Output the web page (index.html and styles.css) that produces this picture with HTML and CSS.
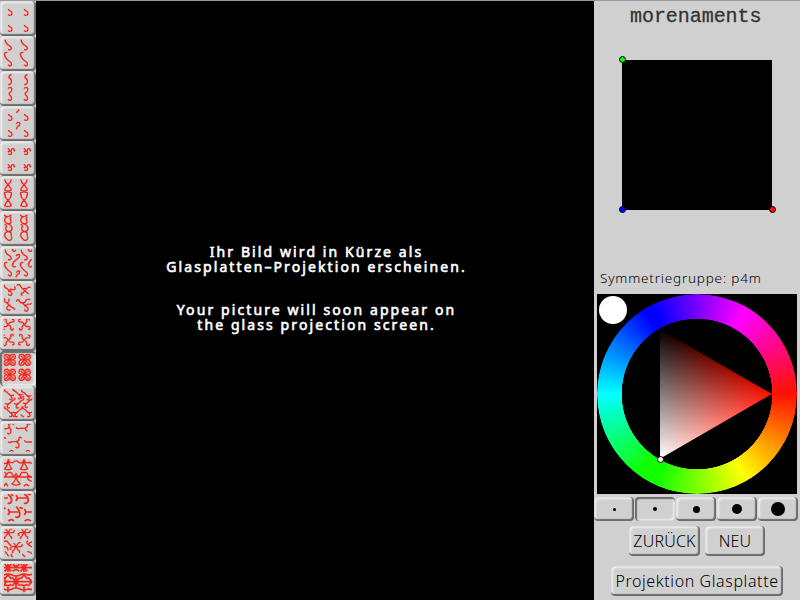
FILE: index.html
```html
<!DOCTYPE html>
<html lang="de">
<head>
<meta charset="utf-8">
<title>morenaments</title>
<link rel="stylesheet" href="styles.css">
</head>
<body>
<svg class="defs" width="0" height="0">
  <defs>
    <path id="hook" d="M-5 -9Q-4 -5 1 -3L5 0Q7 4 5 8Q0 12 -6 8"/>
    <path id="ess" d="M-10 -16Q-9 -8 -2 -1Q10 5 9 11Q5 17 -1 13"/>
    <path id="arm" d="M0 0Q4 -7 9 -7Q18 -5 17 -13Q14 -16 11 -14"/>
    <g id="pin"><use href="#arm"/><use href="#arm" transform="rotate(90)"/><use href="#arm" transform="rotate(180)"/><use href="#arm" transform="rotate(270)"/></g>
    <path id="glass" d="M-10 -16Q-8 -6 0 0Q7 7 10 16Q0 22 -10 16Q-7 7 0 0Q8 -6 10 -16"/>
    <path id="flower" d="M-12 -12L12 12M12 -12L-12 12M-17 -5Q-17 -17 -11 -16Q-3 -18 0 -7Q3 -18 11 -16Q17 -17 17 -5Q10 2 3 0Q17 0 17 9Q17 17 9 17Q2 16 0 7Q-2 16 -9 17Q-17 17 -17 9Q-17 0 -3 0Q-10 2 -17 -5"/>
    <path id="swirl" d="M-15 -15Q-15 -8 -7 -6L6 6Q11 11 8 15Q5 18 1 14M3 3Q10 6 15 2"/>
    <clipPath id="tile"><rect x="11" y="8" width="86" height="87"/></clipPath>
  </defs>
</svg>
<div class="app">
  <nav class="groups">
    <button class="group"><svg viewBox="0 0 105 105"><g clip-path="url(#tile)"><use href="#hook" x="30" y="33"/><use href="#hook" x="78" y="33"/><use href="#hook" x="30" y="81"/><use href="#hook" x="78" y="81"/></g></svg></button>
    <button class="group"><svg viewBox="0 0 105 105"><g clip-path="url(#tile)"><use href="#ess" x="25" y="27"/><use href="#ess" x="73" y="27"/><path d="M22 50Q13 48 13 55Q14 65 27 75Q38 82 33 89Q29 92 24 86M70 50Q61 48 61 55Q62 65 75 75Q86 82 81 89Q77 92 72 86"/></g></svg></button>
    <button class="group"><svg viewBox="0 0 105 105"><g clip-path="url(#tile)"><path id="p3" d="M35 10Q26 12 27 20Q36 25 34 34Q31 44 24 39M24 53Q30 46 35 52Q38 60 27 67Q27 71 34 78Q36 87 30 89Q26 89 24 84"/><use href="#p3" x="48"/></g></svg></button>
    <button class="group"><svg viewBox="0 0 105 105"><g clip-path="url(#tile)"><use href="#hook" x="30" y="33"/><use href="#hook" x="78" y="33"/><use href="#hook" x="30" y="81"/><use href="#hook" x="78" y="81"/><path d="M57 10Q55 16 49 20M48 53Q55 46 59 51Q61 57 54 61Q50 64 49 70"/></g></svg></button>
    <button class="group"><svg viewBox="0 0 105 105"><g clip-path="url(#tile)"><path id="p5" d="M24 22Q28 29 34 33Q37 39 31 41Q27 41 25 38M23 32Q29 33 34 28Q34 22 40 23Q45 26 42 31"/><use href="#p5" x="48"/><use href="#p5" y="48"/><use href="#p5" x="48" y="48"/></g></svg></button>
    <button class="group"><svg viewBox="0 0 105 105"><g clip-path="url(#tile)"><use href="#glass" x="24" y="26"/><use href="#glass" x="72" y="26"/><use href="#glass" x="24" y="73"/><use href="#glass" x="72" y="73"/><path d="M14 58V50Q24 45 34 50V58M62 58V50Q72 45 82 50V58"/></g></svg></button>
    <button class="group"><svg viewBox="0 0 105 105"><g clip-path="url(#tile)"><path id="p7" d="M13 11Q15 17 24 17L35 12M24 17Q13 20 14 30Q18 38 26 39Q36 36 32 28Q28 24 34 17M26 39Q36 44 36 54Q34 62 24 61Q14 58 18 50Q22 44 14 39M24 61Q12 65 14 75Q18 84 26 88Q36 89 35 80Q32 74 34 66L24 61"/><use href="#p7" x="48"/></g></svg></button>
    <button class="group"><svg viewBox="0 0 105 105"><g clip-path="url(#tile)"><use href="#ess" x="25" y="27"/><use href="#ess" x="73" y="27"/><path d="M38 8Q36 15 41 16Q47 17 47 11M86 8Q84 15 89 16Q95 17 96 11M48 30Q55 22 59 28Q60 34 50 40Q38 49 37 57Q39 66 48 61M95 40Q84 50 85 58Q88 66 96 61M49 80Q55 71 59 76Q61 82 52 86L47 94"/><path id="p8" d="M22 50Q13 48 13 55Q14 65 27 75Q38 82 33 89Q29 92 24 86"/><use href="#p8" x="48"/></g></svg></button>
    <button class="group"><svg viewBox="0 0 105 105"><g clip-path="url(#tile)"><path d="M12 11Q13 20 20 22L34 34Q38 42 32 43Q27 44 25 38M24 32Q31 30 33 24Q40 29 45 25Q47 20 43 16M50 14Q56 7 61 14Q64 21 73 28L86 39M73 28Q73 37 65 36Q60 42 68 43M68 24Q75 21 80 24Q86 15 92 20M14 52Q11 63 20 65L35 79Q43 80 44 87M20 65Q29 64 27 53M29 73Q22 74 20 82Q24 91 31 86M49 62Q51 54 57 57Q59 65 67 66L84 82Q85 91 78 91Q73 90 75 84M66 66Q76 66 78 58Q84 51 91 57M72 75Q80 72 84 69Q91 72 95 66"/></g></svg></button>
    <button class="group"><svg viewBox="0 0 105 105"><g clip-path="url(#tile)"><use href="#pin" x="25" y="25"/><use href="#pin" transform="translate(73 25) scale(-1 1)"/><use href="#pin" transform="translate(25 72) scale(-1 1)"/><use href="#pin" x="73" y="72"/></g></svg></button>
    <button class="group pressed"><svg viewBox="0 0 105 105"><g clip-path="url(#tile)"><use href="#flower" x="29" y="26"/><use href="#flower" x="74" y="26"/><use href="#flower" x="29" y="71"/><use href="#flower" x="74" y="71"/></g></svg></button>
    <button class="group"><svg viewBox="0 0 105 105"><g clip-path="url(#tile)"><use href="#swirl" x="27" y="24"/><use href="#swirl" x="53" y="22"/><use href="#swirl" x="79" y="26"/><use href="#swirl" transform="translate(30 50) scale(-1 1)"/><use href="#swirl" transform="translate(57 50) scale(-1 1)"/><use href="#swirl" transform="translate(84 48) scale(-1 1)"/><use href="#swirl" x="27" y="76"/><use href="#swirl" transform="translate(54 76) scale(-1 1)"/><use href="#swirl" x="81" y="76"/><path d="M38 10L48 18M62 38L72 30M36 86L44 94M62 86L72 94"/></g></svg></button>
    <button class="group"><svg viewBox="0 0 105 105"><g clip-path="url(#tile)"><path d="M13 24Q25 24 28 17Q22 8 32 9M28 18Q35 28 31 36Q27 42 22 36M37 8L42 11M48 19Q51 25 58 22H74M74 22Q84 19 82 10Q87 7 91 11M74 22L82 31M12 49L18 53M24 62Q29 67 36 62H49Q59 59 57 50Q61 46 65 52M49 62Q60 68 56 78Q51 84 47 77M73 58Q76 65 84 63H96M28 92Q35 84 41 92M77 92Q84 84 90 92"/></g></svg></button>
    <button class="group"><svg viewBox="0 0 105 105"><g clip-path="url(#tile)"><path d="M12 22Q22 25 25 11Q29 23 40 19Q49 10 57 20Q68 24 72 11Q76 24 87 19L96 22M25 15Q22 30 14 39Q25 45 35 38Q26 28 25 15M72 15Q69 30 61 39Q72 45 83 38Q75 28 72 15"/><path d="M12 64Q24 53 13 49M24 50Q36 46 37 57Q42 65 48 53Q54 66 61 57Q64 46 73 50Q80 47 84 57L96 65M24 50L14 63H96M48 63Q46 76 36 84Q48 91 60 84Q51 76 48 63M84 58Q78 72 95 76M12 90L18 82L24 91M72 91Q78 80 87 91"/></g></svg></button>
    <button class="group heavy"><svg viewBox="0 0 105 105"><g clip-path="url(#tile)"><path d="M12 21H24M24 10Q38 20 34 32Q29 40 23 36M33 10L39 14M48 13L53 21L48 30M50 21H80M73 10Q87 18 84 32Q78 40 72 36M84 12Q88 8 92 12M12 50L16 54M24 54L29 63L24 72M26 63H56M48 47Q63 60 58 76Q52 82 46 77M59 52Q64 47 67 54M73 54L78 63L73 72M76 63H96M25 90Q34 82 42 90M74 90Q84 82 92 90"/></g></svg></button>
    <button class="group"><svg viewBox="0 0 105 105"><g clip-path="url(#tile)"><path id="six" d="M12 20H36M17 9L31 31M31 9L17 31M36 20Q44 20 42 12M31 31Q37 33 34 39M17 31Q12 33 14 39M12 20Q5 22 8 30M31 9L38 7"/><use href="#six" x="48"/><use href="#six" x="24" y="42"/><path d="M12 47Q20 42 24 49T34 59M12 62Q25 61 24 74M15 76L26 91M34 83Q32 90 39 93M84 44Q77 49 84 55T96 63M96 47Q87 50 85 58M82 77Q91 76 96 84M67 84L75 93"/></g></svg></button>
    <button class="group heavy"><svg viewBox="0 0 105 105"><g clip-path="url(#tile)"><path d="M12 20H96M12 62H96M24 9V33M72 9V33M48 44V80M14 9L34 31M34 9L14 31M62 9L82 31M82 9L62 31M36 49L60 75M60 49L36 75M84 49L96 62L84 75M12 49L18 62L12 75M38 10Q48 20 58 10M38 31Q48 21 58 31M12 42Q24 36 36 42T60 42T84 42L96 40M24 41L14 54M24 41L34 54M72 41L62 54M72 41L82 54M14 70Q24 78 34 70M62 70Q72 78 82 70M12 84Q24 90 36 84T60 84T84 84L96 86M24 78V94M72 78V94"/></g></svg></button>
  </nav>
  <main class="canvas">
    <p class="l1">Ihr Bild wird in Kürze als</p>
    <p class="l2">Glasplatten–Projektion erscheinen.</p>
    <p class="l3">Your picture will soon appear on</p>
    <p class="l4">the glass projection screen.</p>
  </main>
  <aside class="panel">
    <h1>morenaments</h1>
    <div class="cell"><i class="handle green"></i><i class="handle blue"></i><i class="handle red"></i></div>
    <p class="symmetry">Symmetriegruppe: p4m</p>
    <div class="picker">
      <div class="ring"></div>
      <div class="triangle"><div class="white"></div></div>
      <i class="swatch"></i><i class="marker"></i>
    </div>
    <div class="brushes">
      <button><i class="s1"></i></button><button class="pressed"><i class="s2"></i></button><button><i class="s3"></i></button><button><i class="s4"></i></button><button><i class="s5"></i></button>
    </div>
    <div class="actions"><button class="back"><span>ZURÜCK</span></button><button class="new"><span>NEU</span></button></div>
    <button class="project"><span>Projektion Glasplatte</span></button>
  </aside>
</div>
</body>
</html>
```
FILE: styles.css
```css
* { box-sizing: border-box; }
body { margin: 0; background: #d0d0d0; overflow: hidden; }
p, h1 { margin: 0; font-weight: normal; white-space: nowrap; }
.defs { display: block; }
.app { display: flex; width: 800px; height: 600px; border-top: 1px solid #999; background: #d0d0d0; }
button {
  display: flex; align-items: center; justify-content: center;
  padding: 0; color: #000; background: #d0d0d0; border: 0; border-radius: 4px;
  box-shadow: inset -1px -1px 1px 1px #6c6c6c, inset 2px 2px 2px #f0f0f0;
  font-family: "Noto Sans", "Open Sans", sans-serif; font-weight: 300;
}
button.pressed { box-shadow: inset 1px 1px 1px 1px #6c6c6c, inset -2px -2px 2px #ececec; }
.groups { width: 36px; display: flex; flex-direction: column; }
.group { width: 36px; height: 35px; flex: none; }
.group svg { width: 35px; height: 35px; flex: none; margin-right: 1px; fill: none; stroke: #f8261a; stroke-width: 4; }
.group.heavy svg { stroke-width: 5.2; }
.canvas {
  width: 558px; background: #000; color: #fff; padding: 244px 0 0 3px; text-align: center;
  font: 14px/14.5px "Noto Sans", "Open Sans", sans-serif; letter-spacing: 2.1px;
  -webkit-text-stroke: .6px #fff;
}
.l3 { margin-top: 29px; }
.panel { width: 206px; display: flex; flex-direction: column; }
h1 { margin: 4px 0 0 36px; height: 24px; color: #333; font: 20px/24px "Liberation Mono", monospace; letter-spacing: -.05px; -webkit-text-stroke: .3px #333; }
.cell { position: relative; width: 150px; height: 150px; margin: 31px 0 0 28px; background: #000; }
.handle { position: absolute; width: 7px; height: 7px; border: 1px solid #000; border-radius: 50%; }
.green { left: -3px; top: -4px; background: #0f0; }
.blue { left: -3px; top: 146px; background: #00f; }
.red { left: 147px; top: 146px; background: #f10; }
.symmetry { margin: 58px 0 0 6px; height: 20px; color: #000; font: 300 13.5px/20px "Noto Sans", "Open Sans", sans-serif; letter-spacing: .8px; }
.picker { position: relative; width: 200px; height: 200px; margin: 6px 0 0 3px; background: #000; }
.ring {
  width: 200px; height: 200px; border-radius: 50%;
  background: conic-gradient(from 90deg, #f10, #ff0 60deg, #1f0 115deg, #1f0 125deg, #0ff 180deg, #00f 238deg, #00f 243deg, #f0f 300deg, #f10);
  -webkit-mask: radial-gradient(circle, transparent 75px, #000 75.5px);
  mask: radial-gradient(circle, transparent 75px, #000 75.5px);
}
.triangle {
  position: absolute; left: 62.5px; top: 35px; width: 112.5px; height: 130px; isolation: isolate;
  background: linear-gradient(90deg, #000, #f10); clip-path: polygon(0 0, 100% 50%, 0 100%);
}
.white { width: 100%; height: 100%; background: linear-gradient(210deg, #000 33.3%, #fff); mix-blend-mode: plus-lighter; }
.swatch { position: absolute; left: 2px; top: 2px; width: 28px; height: 28px; border-radius: 50%; background: #fff; }
.marker { position: absolute; left: 60px; top: 162px; width: 7px; height: 7px; border: 1px solid #000; border-radius: 50%; background: #fff; }
.brushes { display: flex; gap: 1px; margin-top: 3px; }
.brushes button { width: 40px; height: 24px; flex: none; }
.brushes i { border-radius: 50%; background: #000; }
.s1 { width: 3px; height: 3px; }
.s2 { width: 4px; height: 4px; }
.s3 { width: 7px; height: 7px; }
.s4 { width: 10px; height: 10px; }
.s5 { width: 14px; height: 14px; }
.actions { display: flex; gap: 5px; margin: 5px 0 0 35px; }
.actions button { height: 30px; font-size: 16px; letter-spacing: .2px; }
.actions .back { width: 71px; }
.actions .new { width: 60px; }
.project { width: 172px; height: 30px; margin: 10px 0 0 17px; font-size: 16px; letter-spacing: .6px; white-space: nowrap; }
```
